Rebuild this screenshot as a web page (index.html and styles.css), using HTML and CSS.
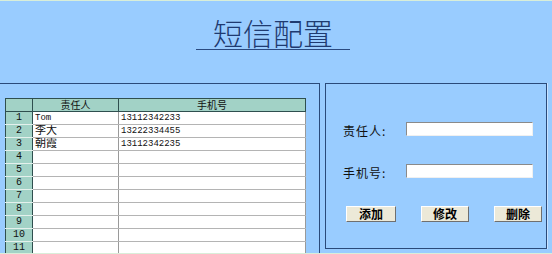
FILE: index.html
```html
<!DOCTYPE html>
<html lang="zh-CN">
<head>
    <meta charset="UTF-8">
    <title>短信配置</title>
    <link rel="stylesheet" href="styles.css">
</head>
<body>
    <div class="sms-page">
        <div class="sms-header">
            <h1 class="sms-title">短信配置</h1>
        </div>

        <div class="sms-panels">
            <div class="sms-list-panel">
                <table class="sms-table">
                    <thead>
                        <tr>
                            <th class="sms-num"></th>
                            <th class="sms-name">责任人</th>
                            <th class="sms-phone">手机号</th>
                        </tr>
                    </thead>
                    <tbody>
                        <tr><td class="sms-num">1</td><td>Tom</td><td>13112342233</td></tr>
                        <tr><td class="sms-num">2</td><td class="sms-cjk">李大</td><td>13222334455</td></tr>
                        <tr><td class="sms-num">3</td><td class="sms-cjk">朝霞</td><td>13112342235</td></tr>
                        <tr><td class="sms-num">4</td><td></td><td></td></tr>
                        <tr><td class="sms-num">5</td><td></td><td></td></tr>
                        <tr><td class="sms-num">6</td><td></td><td></td></tr>
                        <tr><td class="sms-num">7</td><td></td><td></td></tr>
                        <tr><td class="sms-num">8</td><td></td><td></td></tr>
                        <tr><td class="sms-num">9</td><td></td><td></td></tr>
                        <tr><td class="sms-num">10</td><td></td><td></td></tr>
                        <tr><td class="sms-num">11</td><td></td><td></td></tr>
                    </tbody>
                </table>
            </div>

            <div class="sms-form-panel">
                <div class="sms-form-row">
                    <label for="owner" class="sms-label">责任人:</label>
                    <input type="text" id="owner" class="sms-input">
                </div>
                <div class="sms-form-row">
                    <label for="mobile" class="sms-label">手机号:</label>
                    <input type="text" id="mobile" class="sms-input">
                </div>
                <div class="sms-buttons">
                    <button class="sms-button sms-button-add">添加</button>
                    <button class="sms-button">修改</button>
                    <button class="sms-button">删除</button>
                </div>
            </div>
        </div>
    </div>
</body>
</html>
```

FILE: styles.css
```css
body {
    margin: 0;
    background-color: #99ccff;
    font-family: "Noto Sans CJK SC", sans-serif;
    overflow: hidden;
}

.sms-page {
    width: 552px;
    height: 254px;
    border-top: 1px solid #d9eed9;
    border-bottom: 1px solid #d9eed9;
    box-sizing: border-box;
}

.sms-header {
    height: 82px;
    padding-top: 16px;
    box-sizing: border-box;
    display: flex;
    justify-content: center;
}

.sms-title {
    margin: 0 6px 0 0;
    height: 32px;
    width: 154px;
    box-sizing: content-box;
    border-bottom: 1px solid #2a4a80;
    font-size: 30px;
    line-height: 30px;
    font-weight: 300;
    color: #1f3a70;
    text-align: center;
}

.sms-panels {
    display: flex;
    height: 170px;
}

.sms-list-panel {
    width: 320px;
    height: 170px;
    border-top: 1px solid #2a4a7a;
    border-right: 1px solid #2a4a7a;
    box-sizing: border-box;
    padding: 14px 0 0 5px;
    overflow: hidden;
}

.sms-table {
    width: 301px;
    border-collapse: collapse;
    table-layout: fixed;
    background-color: #fff;
    border: 1px solid #2f4f4f;
    font-family: "Liberation Mono", "Noto Sans CJK SC", monospace;
    font-size: 9px;
    color: #111;
}

.sms-table th {
    height: 12px;
    padding: 0;
    background-color: #a2d2c6;
    border: 1px solid #2f4f4f;
    font-family: "Noto Sans CJK SC", sans-serif;
    font-size: 10px;
    font-weight: normal;
    line-height: 12px;
    overflow: hidden;
}

.sms-table td {
    height: 12px;
    padding: 0 0 0 2px;
    line-height: 12px;
    border-bottom: 1px solid #b4b4b4;
    border-right: 1px solid #9a9a9a;
    white-space: nowrap;
    overflow: hidden;
}

.sms-table td.sms-num {
    padding: 0;
    text-align: center;
    background-color: #a2d2c6;
    border-right: 1px solid #2f4f4f;
    border-bottom: 1px solid #e4f0ec;
    font-size: 10px;
}

.sms-table td.sms-cjk {
    height: 11px;
    padding-top: 1px;
    font-size: 11px;
    line-height: 11px;
}

.sms-table th.sms-num {
    width: 26px;
}

.sms-table th.sms-name {
    width: 85px;
}

.sms-form-panel {
    width: 222px;
    height: 166px;
    margin-left: 5px;
    border: 1px solid #2a4a7a;
    box-shadow: 1px 0 0 #c8e2ff;
    box-sizing: border-box;
    padding: 38px 0 0 17px;
}

.sms-form-row {
    display: flex;
    align-items: flex-start;
    margin-bottom: 26px;
}

.sms-label {
    width: 63px;
    margin-top: 2px;
    font-size: 12px;
    line-height: 14px;
    color: #111;
    letter-spacing: 1px;
}

.sms-input {
    width: 127px;
    height: 14px;
    padding: 0;
    box-sizing: border-box;
    background-color: #fff;
    border: 1px solid;
    border-color: #8a8a8a #f0f0f0 #f0f0f0 #8a8a8a;
}

.sms-buttons {
    display: flex;
    margin-top: 3px;
    padding-left: 3px;
}

.sms-button {
    width: 48px;
    height: 16px;
    margin-left: 25px;
    padding: 0;
    background-color: #ece9d8;
    border: 1px solid;
    border-color: #ffffff #6f6f6f #6f6f6f #ffffff;
    font-family: "Noto Sans CJK SC", sans-serif;
    font-size: 12px;
    font-weight: bold;
    line-height: 14px;
    color: #000;
}

.sms-button-add {
    width: 50px;
    margin-left: 0;
}
```
